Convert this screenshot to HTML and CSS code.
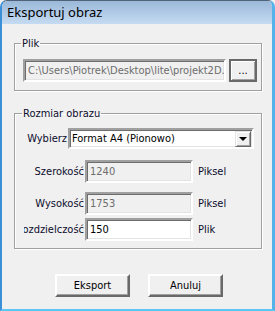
FILE: index.html
```html
<!DOCTYPE html>
<html lang="pl">
<head>
  <meta charset="UTF-8" />
  <title>Eksportuj obraz</title>
  <link rel="stylesheet" href="styles.css">
</head>
<body>
  <div class="window">
    <div class="titlebar">Eksportuj obraz</div>

    <div class="content">
      <fieldset class="group group-file">
        <legend>Plik</legend>
        <div class="path-row">
          <div class="textbox disabled path">C:\Users\Piotrek\Desktop\lite\projekt2D.</div>
          <button class="btn btn-browse">...</button>
        </div>
      </fieldset>

      <fieldset class="group group-size">
        <legend>Rozmiar obrazu</legend>

        <div class="row row-select">
          <span class="label label-short">Wybierz</span>
          <div class="select">
            <span class="select-value">Format A4 (Pionowo)</span>
            <span class="select-arrow"></span>
          </div>
        </div>

        <div class="row row-width">
          <span class="label">Szerokość</span>
          <div class="textbox disabled field">1240</div>
          <span class="unit">Piksel</span>
        </div>

        <div class="row row-height">
          <span class="label">Wysokość</span>
          <div class="textbox disabled field">1753</div>
          <span class="unit">Piksel</span>
        </div>

        <div class="row row-dpi">
          <span class="label">Rozdzielczość</span>
          <div class="textbox field">150</div>
          <span class="unit">Plik</span>
        </div>
      </fieldset>

      <div class="actions">
        <button class="btn btn-action">Eksport</button>
        <button class="btn btn-action">Anuluj</button>
      </div>
    </div>
  </div>
</body>
</html>
```

FILE: styles.css
```css
* {
  box-sizing: border-box;
}

body {
  margin: 0;
  background: #f0f0f0;
  font-family: 'DejaVu Sans Condensed', 'DejaVu Sans', sans-serif;
  font-size: 11px;
  color: #000;
}

.window {
  width: 275px;
  height: 311px;
  display: flex;
  flex-direction: column;
  background: #f0f0f0;
  border-top: 1px solid #4f6277;
  border-left: 2px solid #3b8fd6;
  border-right: 3px solid #55b3ea;
  border-bottom: 2px solid #5cc7f0;
  border-radius: 7px 7px 0 0;
  overflow: hidden;
}

.titlebar {
  height: 23px;
  line-height: 23px;
  padding-left: 5px;
  font-family: 'Noto Sans', 'Liberation Sans', sans-serif;
  font-size: 13px;
  color: #000;
  background: linear-gradient(#9bb8d9, #c5dbf2);
}

.content {
  padding: 0 10px 0 12px;
}

/* group boxes */
.group {
  margin: 0;
  padding: 0 4px 0 8px;
  border: 1px solid #a0a0a0;
  box-shadow: inset 1px 1px #fff, 1px 1px #fff;
}

.group legend {
  padding: 0 1px;
  margin-left: -2px;
  line-height: 13px;
  color: #0c0c2c;
}

.group-file {
  margin-top: 13px;
  padding-top: 9px;
  padding-bottom: 8px;
}

.group-size {
  margin-top: 16px;
  padding-left: 9px;
  padding-top: 8px;
  padding-bottom: 7px;
}

.path-row {
  display: flex;
  gap: 3px;
}

/* sunken edit boxes */
.textbox {
  height: 23px;
  line-height: 19px;
  padding: 0 3px;
  background: #fff;
  border: 2px solid;
  border-color: #a0a0a0 #fff #fff #a0a0a0;
  box-shadow: inset 1px 1px #6d6d6d, inset -1px -1px #e3e3e3;
  white-space: nowrap;
  overflow: hidden;
}

.textbox.disabled {
  background: #f0f0f0;
  color: #6d6d6d;
}

.path {
  width: 203px;
}

.btn {
  font: inherit;
  color: #000;
  background: #f0f0f0;
  border: 2px solid;
  border-color: #fff #696969 #696969 #fff;
  box-shadow: inset -1px -1px #a0a0a0;
  padding: 0;
}

.btn-browse {
  width: 28px;
  height: 23px;
  border-color: #696969;
  box-shadow: inset 1px 1px #fff, inset -1px -1px #a0a0a0;
  line-height: 12px;
}

.row {
  display: flex;
  align-items: center;
}

.label {
  width: 61px;
  flex-shrink: 0;
  display: flex;
  justify-content: flex-end;
  overflow: hidden;
  white-space: nowrap;
  padding-right: 1px;
  color: #0c0c2c;
}

.label-short {
  width: 44px;
}

.select {
  width: 186px;
  height: 21px;
  display: flex;
  align-items: center;
  justify-content: space-between;
  background: #fff;
  border: 2px solid;
  border-color: #a0a0a0 #fff #fff #a0a0a0;
  box-shadow: inset 1px 1px #6d6d6d, inset -1px -1px #e3e3e3;
  padding: 0 1px 0 2px;
}

.select-arrow {
  width: 16px;
  height: 16px;
  display: flex;
  align-items: center;
  justify-content: center;
  background: #f0f0f0;
  border: 1px solid;
  border-color: #e3e3e3 #696969 #696969 #e3e3e3;
  box-shadow: inset 1px 1px #fff, inset -1px -1px #a0a0a0;
}

.select-arrow::after {
  content: "";
  border-left: 4px solid transparent;
  border-right: 4px solid transparent;
  border-top: 4px solid #000;
  margin-top: 1px;
}

.field {
  width: 108px;
}

.unit {
  margin-left: 5px;
  color: #0c0c2c;
}

.row-width {
  margin-top: 11px;
}

.row-height {
  margin-top: 9px;
}

.row-dpi {
  margin-top: 3px;
}

.actions {
  display: flex;
  gap: 18px;
  padding-left: 41px;
  margin-top: 25px;
}

.btn-action {
  width: 75px;
  height: 23px;
}
```
